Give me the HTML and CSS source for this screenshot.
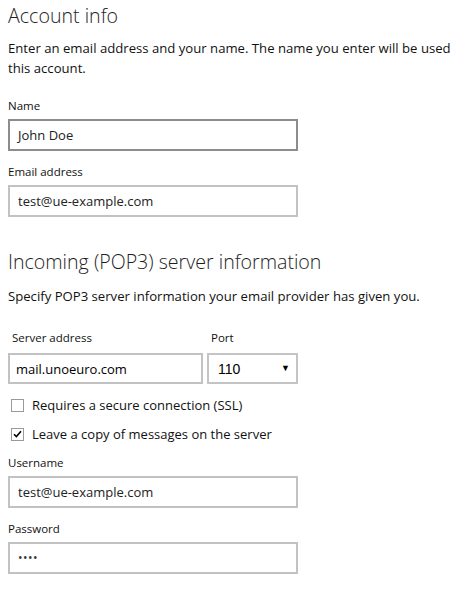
FILE: index.html
```html
<!DOCTYPE html>
<html>
<head>
<meta charset="utf-8">
<link rel="stylesheet" href="styles.css">
</head>
<body>
<div class="page">
  <h1 class="title">Account info</h1>
  <p class="desc">Enter an email address and your name. The name you enter will be used<br>this account.</p>

  <label class="label">Name</label>
  <div class="input hover">John Doe</div>

  <label class="label mt">Email address</label>
  <div class="input">test@ue-example.com</div>

  <h1 class="title title-2">Incoming (POP3) server information</h1>
  <p class="desc desc-2">Specify POP3 server information your email provider has given you.</p>

  <div class="server-row">
    <div class="col col-address">
      <label class="label label-indent">Server address</label>
      <div class="input input-server">mail.unoeuro.com</div>
    </div>
    <div class="col col-port">
      <label class="label label-indent">Port</label>
      <div class="select"><span class="select-value">110</span><span class="arrow">&#9660;</span></div>
    </div>
  </div>

  <div class="check-row first">
    <span class="box"></span>
    <span class="check-text">Requires a secure connection (SSL)</span>
  </div>
  <div class="check-row">
    <span class="box"><svg width="9" height="8" viewBox="0 0 9 8"><path d="M1 4.2 L3.4 6.6 L8 1.2" fill="none" stroke="#000" stroke-width="1.6"/></svg></span>
    <span class="check-text">Leave a copy of messages on the server</span>
  </div>

  <label class="label mt-user">Username</label>
  <div class="input">test@ue-example.com</div>

  <label class="label mt">Password</label>
  <div class="input input-pass">&#8226;&#8226;&#8226;&#8226;</div>
</div>
</body>
</html>
```

FILE: styles.css
```css
html, body {
  margin: 0;
  padding: 0;
  background: #ffffff;
  overflow: hidden;
}

.page {
  padding: 2px 8px 0 8px;
  font-family: "Open Sans", "Noto Sans", sans-serif;
  color: #1a1a1a;
  display: flex;
  flex-direction: column;
  align-items: flex-start;
}

.title {
  margin: 0;
  font-size: 19.6px;
  line-height: 28px;
  font-weight: 300;
  color: #1e1e1e;
}

.title-2 {
  margin-top: 31px;
}

.desc {
  margin: 8px 0 0 0;
  font-size: 13.15px;
  line-height: 20px;
  color: #111;
  white-space: nowrap;
}

.desc-2 {
  margin-top: 10px;
}

.label {
  display: block;
  font-size: 11.5px;
  line-height: 16px;
  color: #111;
  margin-top: 20px;
  margin-bottom: 5px;
}

.label.mt {
  margin-top: 13px;
}

.label.mt-user {
  margin-top: 11px;
}

.input {
  box-sizing: border-box;
  width: 290px;
  height: 32px;
  border: 2px solid #c2c2c2;
  background: #fff;
  padding: 0 8px;
  font-size: 13px;
  line-height: 28px;
  color: #222;
}

.input.hover {
  border-color: #8c8c8c;
}

.server-row {
  display: flex;
  gap: 4px;
  margin-top: 24px;
}

.col {
  display: flex;
  flex-direction: column;
}

.label.label-indent {
  margin: 0 0 7px 4px;
}

.input.input-server {
  width: 195px;
  height: 31px;
  padding-left: 6px;
  color: #000;
  font-size: 13px;
}

.select {
  box-sizing: border-box;
  width: 91px;
  height: 31px;
  border: 2px solid #c4c4c4;
  display: flex;
  align-items: center;
  justify-content: space-between;
  padding: 0 6px 0 9px;
  font-family: "Liberation Sans", Arial, sans-serif;
  font-size: 14px;
  color: #000;
}

.arrow {
  font-size: 9px;
  line-height: 1;
}

.check-row {
  display: flex;
  align-items: center;
  height: 20px;
  margin-top: 9px;
  padding-left: 3px;
}

.check-row.first {
  margin-top: 11px;
}

.box {
  box-sizing: border-box;
  width: 13px;
  height: 13px;
  border: 1px solid #9a9a9a;
  background: #fff;
  display: flex;
  align-items: center;
  justify-content: center;
}

.check-text {
  margin-left: 8px;
  font-size: 13px;
  color: #111;
}

.input.input-pass {
  font-size: 12px;
  letter-spacing: 0.5px;
  color: #333;
}
```
